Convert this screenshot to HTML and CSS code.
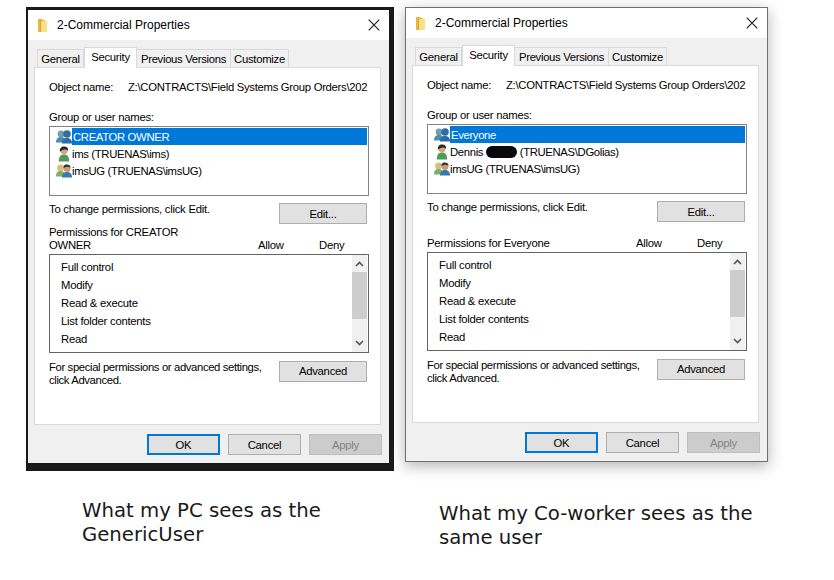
FILE: index.html
```html
<!DOCTYPE html>
<html lang="en">
<head>
<meta charset="utf-8">
<title>Commercial Properties</title>
<link rel="stylesheet" href="styles.css">
</head>
<body>
<svg class="defs" width="0" height="0" aria-hidden="true">
  <defs>
    <symbol id="folder" viewBox="0 0 10 15">
      <path d="M0 1h4l1 1h2v12H0z" fill="#e8b93e"/>
      <path d="M3 3h6v11H3z" fill="#fbe08a"/>
      <path d="M2 3l1-1v12H2z" fill="#d9a52c"/>
    </symbol>
    <symbol id="close" viewBox="0 0 12 12">
      <path d="M.7.7l10.6 10.6M11.3.7L.7 11.3" stroke="#222" stroke-width="1.2" fill="none"/>
    </symbol>
    <symbol id="up" viewBox="0 0 9 6"><path d="M1 5l3.5-3.5L8 5" stroke="#555" stroke-width="1.6" fill="none"/></symbol>
    <symbol id="down" viewBox="0 0 9 6"><path d="M1 1l3.5 3.5L8 1" stroke="#555" stroke-width="1.6" fill="none"/></symbol>
    <symbol id="group" viewBox="0 0 16 15">
      <circle cx="5" cy="4.500" r="3.400" fill="#6f9fb5"/>
      <path d="M0 13c0-4 2-5.500 5-5.500s5 1.500 5 5.500z" fill="#4f8ca8"/>
      <circle cx="11" cy="4.500" r="3.800" fill="#2f6f9f"/>
      <path d="M6 14c0-4 2-5.500 5-5.500s5 1.500 5 5.500z" fill="#2b6ca6"/>
    </symbol>
    <symbol id="person" viewBox="0 0 16 17">
      <circle cx="8" cy="5" r="3.800" fill="#d8a67c"/>
      <path d="M3.800 6c-.8-3.500 1.500-5.500 4.200-5.500s5 1.500 4.300 4.500c-2-2-5-2-8.500 1z" fill="#2b2b26"/>
      <path d="M2.500 16.500c0-5.500 2-7.500 5.500-7.500s5.500 2 5.500 7.500z" fill="#4f9a5c"/>
    </symbol>
    <symbol id="mixed" viewBox="0 0 16 15">
      <circle cx="4.500" cy="4.500" r="3.400" fill="#d9bf7a"/>
      <path d="M0 13c0-4 1.500-5.500 4.500-5.500S9 9 9 13z" fill="#7fb069"/>
      <circle cx="11" cy="5" r="3.500" fill="#c99a78"/>
      <path d="M7.500 4.500c0-3 1.500-3.500 3.500-3.500s3.500 1 3.500 3c-2-1-4-1-7 .5z" fill="#2f2f2f"/>
      <path d="M6 14c0-4 2-5.500 5-5.500s5 1.500 5 5.500z" fill="#3a78ad"/>
    </symbol>
  </defs>
</svg>

<section class="dialog dialog-black">
  <header class="titlebar">
    <svg class="folder"><use href="#folder"/></svg>
    <span class="title">2-Commercial Properties</span>
    <svg class="close"><use href="#close"/></svg>
  </header>
  <div class="content">
    <nav class="tabs">
      <span class="tab tab-general">General</span>
      <span class="tab tab-active">Security</span>
      <span class="tab tab-prev">Previous Versions</span>
      <span class="tab tab-custom">Customize</span>
    </nav>
    <div class="panel">
      <div class="object-row"><span class="object-label">Object name:</span><span class="object-value">Z:\CONTRACTS\Field Systems Group Orders\202</span></div>
      <div class="group-label">Group or user names:</div>
      <ul class="users">
        <li class="user user-selected"><svg class="user-icon"><use href="#group"/></svg><span class="user-name">CREATOR OWNER</span></li>
        <li class="user"><svg class="user-icon"><use href="#person"/></svg><span class="user-name">ims (TRUENAS\ims)</span></li>
        <li class="user"><svg class="user-icon"><use href="#mixed"/></svg><span class="user-name">imsUG (TRUENAS\imsUG)</span></li>
      </ul>
      <div class="action-row"><span class="change-text">To change permissions, click Edit.</span><button class="btn">Edit...</button></div>
      <div class="perm-head"><span class="perm-title">Permissions for CREATOR OWNER</span><span class="allow">Allow</span><span class="deny">Deny</span></div>
      <div class="perms">
        <ul class="perm-list">
          <li class="perm">Full control</li>
          <li class="perm">Modify</li>
          <li class="perm">Read &amp; execute</li>
          <li class="perm">List folder contents</li>
          <li class="perm">Read</li>
        </ul>
        <div class="scrollbar">
          <svg class="chev"><use href="#up"/></svg>
          <div class="thumb"></div>
          <svg class="chev chev-down"><use href="#down"/></svg>
        </div>
      </div>
      <div class="special-row"><span class="special-text">For special permissions or advanced settings, click Advanced.</span><button class="btn">Advanced</button></div>
    </div>
    <footer class="footer">
      <button class="btn btn-foot btn-default">OK</button>
      <button class="btn btn-foot">Cancel</button>
      <button class="btn btn-foot btn-disabled">Apply</button>
    </footer>
  </div>
</section>

<section class="dialog dialog-shadow">
  <header class="titlebar">
    <svg class="folder"><use href="#folder"/></svg>
    <span class="title">2-Commercial Properties</span>
    <svg class="close"><use href="#close"/></svg>
  </header>
  <div class="content">
    <nav class="tabs">
      <span class="tab tab-general">General</span>
      <span class="tab tab-active">Security</span>
      <span class="tab tab-prev">Previous Versions</span>
      <span class="tab tab-custom">Customize</span>
    </nav>
    <div class="panel">
      <div class="object-row"><span class="object-label">Object name:</span><span class="object-value">Z:\CONTRACTS\Field Systems Group Orders\202</span></div>
      <div class="group-label">Group or user names:</div>
      <ul class="users">
        <li class="user user-selected"><svg class="user-icon"><use href="#group"/></svg><span class="user-name">Everyone</span></li>
        <li class="user"><svg class="user-icon"><use href="#person"/></svg><span class="user-name">Dennis <span class="redact"></span> (TRUENAS\DGolias)</span></li>
        <li class="user"><svg class="user-icon"><use href="#mixed"/></svg><span class="user-name">imsUG (TRUENAS\imsUG)</span></li>
      </ul>
      <div class="action-row"><span class="change-text">To change permissions, click Edit.</span><button class="btn">Edit...</button></div>
      <div class="perm-head"><span class="perm-title">Permissions for Everyone</span><span class="allow">Allow</span><span class="deny">Deny</span></div>
      <div class="perms">
        <ul class="perm-list">
          <li class="perm">Full control</li>
          <li class="perm">Modify</li>
          <li class="perm">Read &amp; execute</li>
          <li class="perm">List folder contents</li>
          <li class="perm">Read</li>
        </ul>
        <div class="scrollbar">
          <svg class="chev"><use href="#up"/></svg>
          <div class="thumb"></div>
          <svg class="chev chev-down"><use href="#down"/></svg>
        </div>
      </div>
      <div class="special-row"><span class="special-text">For special permissions or advanced settings, click Advanced.</span><button class="btn">Advanced</button></div>
    </div>
    <footer class="footer">
      <button class="btn btn-foot btn-default">OK</button>
      <button class="btn btn-foot">Cancel</button>
      <button class="btn btn-foot btn-disabled">Apply</button>
    </footer>
  </div>
</section>

<p class="caption caption-left">What my PC sees as the GenericUser</p>
<p class="caption caption-right">What my Co-worker sees as the same user</p>
</body>
</html>
```
FILE: styles.css
```css
* { box-sizing: border-box; }
html, body { margin: 0; padding: 0; }
body {
  width: 834px;
  height: 580px;
  background: #fff;
  position: relative;
  overflow: hidden;
  font-family: "Liberation Sans", Arial, sans-serif;
  font-size: 11.3px;
  letter-spacing: -0.26px;
  color: #000;
}
.defs { position: absolute; }
ul { list-style: none; margin: 0; padding: 0; }

.dialog {
  position: absolute;
  background: #fff;
  width: 368px;
}
.dialog-black {
  left: 26px;
  top: 7px;
  height: 464px;
  border-style: solid;
  border-color: #1a1a1a;
  border-width: 3px 5px 8px 2px;
  z-index: 2;
}
.dialog-shadow {
  left: 405px;
  top: 7px;
  width: 363px;
  height: 455px;
  border: 1px solid #707070;
  box-shadow: 0 4px 14px rgba(0, 0, 0, 0.3);
  z-index: 1;
}

.titlebar {
  height: 30px;
  display: flex;
  align-items: center;
  padding-left: 10px;
  padding-right: 9px;
}
.folder { width: 10px; height: 15px; flex: none; }
.title { margin-left: 9px; flex: 1; font-size: 12px; letter-spacing: 0; }
.close { width: 12px; height: 12px; flex: none; }

.content {
  background: #f0f0f0;
  height: 423px;
  padding: 7px 8px 0 6px;
}
.tabs {
  display: flex;
  align-items: flex-end;
  height: 21px;
  margin-bottom: -1px;
  padding-left: 3px;
  position: relative;
  z-index: 1;
}
.tab {
  height: 18px;
  margin-bottom: 1px;
  background: #f0f0f0;
  border: 1px solid #d9d9d9;
  border-bottom: 0;
  border-left: 0;
  display: flex;
  align-items: center;
  justify-content: center;
  padding-top: 1px;
  white-space: nowrap;
}
.tab-general { width: 47px; border-left: 1px solid #d9d9d9; }
.tab-active {
  width: 53px;
  height: 21px;
  margin-bottom: 0;
  background: #fff;
  border-left: 1px solid #d9d9d9;
  padding-top: 0;
  padding-bottom: 2px;
}
.tab-prev { width: 94px; letter-spacing: -0.32px; }
.tab-custom { width: 58px; }

.panel {
  width: 347px;
  height: 358px;
  background: #fff;
  border: 1px solid #d9d9d9;
  padding: 11px 11px 0 14px;
}
.object-row {
  display: flex;
  height: 16px;
  line-height: 16px;
  white-space: nowrap;
  width: 320px;
}
.object-label { width: 79px; flex: none; }
.object-value { letter-spacing: -0.29px; }
.group-label { margin-top: 14px; height: 16px; line-height: 16px; }

.users {
  margin-top: 1px;
  height: 70px;
  border: 1px solid #828282;
  padding: 1px;
}
.user {
  height: 17px;
  display: flex;
  align-items: center;
  padding-left: 5px;
}
.user-icon { width: 16px; height: 16px; flex: none; }
.user-name {
  flex: 1;
  height: 17px;
  line-height: 18px;
  white-space: nowrap;
  letter-spacing: -0.34px;
}
.user-selected .user-name { background: #0078d7; color: #fff; padding-left: 1px; }
.redact {
  display: inline-block;
  width: 31px;
  height: 12px;
  background: #0a0a0a;
  border-radius: 6px;
  vertical-align: -2px;
}

.action-row {
  margin-top: 7px;
  margin-right: 2px;
  display: flex;
  justify-content: space-between;
  align-items: flex-start;
}
.change-text { line-height: 12px; }
.btn {
  font: inherit;
  letter-spacing: inherit;
  color: #000;
  width: 88px;
  height: 21px;
  padding: 0;
  flex: none;
  background: #e1e1e1;
  border: 1px solid #adadad;
}
.perm-head {
  margin-top: 2px;
  height: 26px;
  display: flex;
  line-height: 13px;
  align-items: flex-end;
}
.perm-title { width: 140px; flex: none; }
.allow { margin-left: 69px; width: 61px; }
.deny { width: 30px; }

.perms {
  margin-top: 2px;
  height: 99px;
  border: 1px solid #646464;
  display: flex;
  padding: 0 1px 0 0;
}
.perm-list { flex: 1; padding: 3px 0 0 11px; }
.perm { height: 18px; line-height: 18px; }
.scrollbar {
  width: 15px;
  flex: none;
  background: #f0f0f0;
  display: flex;
  flex-direction: column;
  align-items: center;
}
.chev { width: 9px; height: 6px; margin-top: 6px; flex: none; }
.thumb {
  align-self: stretch;
  height: 47px;
  margin-top: 5px;
  background: #cdcdcd;
}
.chev-down { margin-top: 21px; }

.special-row {
  margin-top: 8px;
  margin-right: 2px;
  display: flex;
  justify-content: space-between;
  align-items: flex-start;
  line-height: 13px;
}
.special-text { width: 222px; letter-spacing: -0.37px; }

.footer {
  margin-top: 9px;
  margin-right: -1px;
  display: flex;
  justify-content: flex-end;
  gap: 8px;
}
.btn-foot { width: 73px; }
.btn-default { border: 2px solid #0078d7; }
.btn-disabled { background: #cccccc; border-color: #bfbfbf; color: #838383; }

.caption {
  position: absolute;
  margin: 0;
  font-family: "DejaVu Sans", sans-serif;
  font-size: 19.7px;
  line-height: 24px;
  letter-spacing: 0;
  color: #1a1a1a;
}
.caption-left { left: 82px; top: 499px; width: 260px; }
.caption-right { left: 439px; top: 502px; width: 330px; }
```
